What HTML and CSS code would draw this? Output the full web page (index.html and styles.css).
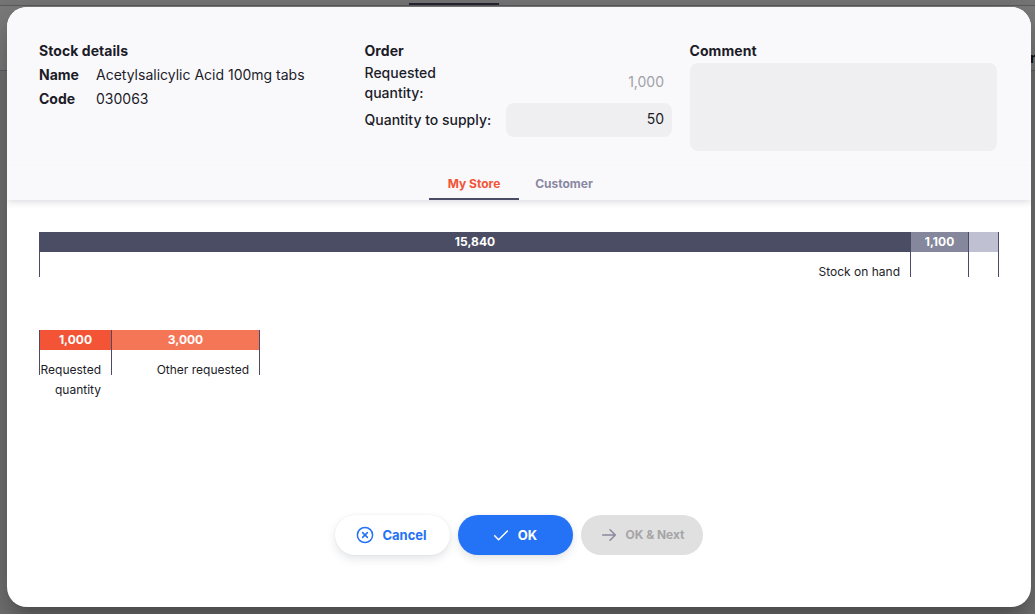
FILE: index.html
```html
<!DOCTYPE html>
<html lang="en">
<head>
<meta charset="utf-8">
<title>Stock details</title>
<link rel="stylesheet" href="styles.css">
</head>
<body>
<div class="page" aria-hidden="true">
  <div class="page-tabs"><span class="page-tab"></span></div>
  <div class="page-columns"><span class="page-column">m</span></div>
</div>
<main class="modal">
  <header class="header">
    <section class="col">
      <h2 class="title">Stock details</h2>
      <div class="detail"><b class="detail-key">Name</b><span class="value">Acetylsalicylic Acid 100mg tabs</span></div>
      <div class="detail"><b class="detail-key">Code</b><span class="value">030063</span></div>
    </section>
    <section class="col">
      <h2 class="title">Order</h2>
      <div class="field requested"><span class="field-label">Requested quantity:</span><span class="readonly">1,000</span></div>
      <div class="field"><span class="field-label">Quantity to supply:</span><span class="input">50</span></div>
    </section>
    <section class="col">
      <h2 class="title">Comment</h2>
      <div class="comment"></div>
    </section>
  </header>
  <nav class="tabs">
    <span class="tab active">My Store</span>
    <span class="tab">Customer</span>
  </nav>
  <div class="charts">
    <div class="chart stock">
      <div class="segment on-hand"><div class="bar">15,840</div><div class="caption">Stock on hand</div></div>
      <div class="segment incoming"><div class="bar">1,100</div><div class="caption"></div></div>
      <div class="segment other"><div class="bar"></div><div class="caption"></div></div>
    </div>
    <div class="chart demand">
      <div class="segment this-request"><div class="bar">1,000</div><div class="caption">Requested quantity</div></div>
      <div class="segment other-request"><div class="bar">3,000</div><div class="caption">Other requested</div></div>
    </div>
  </div>
  <footer class="actions">
    <button class="button cancel">
      <svg class="icon" viewBox="0 0 20 20"><circle cx="10" cy="10" r="7.6"/><path d="M7.6 7.6l4.8 4.8M12.4 7.6l-4.8 4.8"/></svg>
      Cancel
    </button>
    <button class="button ok">
      <svg class="icon" viewBox="0 0 20 20"><path d="M3.7 10.8l3.9 4L16.4 6"/></svg>
      OK
    </button>
    <button class="button next" disabled>
      <svg class="icon" viewBox="0 0 20 20"><path d="M3.7 10h12.6M11 4.7l5.3 5.3-5.3 5.3"/></svg>
      OK &amp; Next
    </button>
  </footer>
</main>
</body>
</html>
```
FILE: styles.css
```css
* { box-sizing: border-box; }
body {
  margin: 0;
  width: 1035px;
  height: 614px;
  overflow: hidden;
  position: relative;
  font-family: Inter, "Liberation Sans", sans-serif;
  color: #1c1c28;
  background: #747474;
}
.page-tabs {
  height: 6px;
  padding: 3px 0 0 409px;
  border-bottom: 1px solid #5c5c5e;
  background: #777;
}
.page-tab { display: block; width: 90px; height: 2px; background: #262632; }
.page-columns {
  display: flex;
  justify-content: flex-end;
  align-items: flex-end;
  height: 65px;
  padding-bottom: 4px;
  border-bottom: 1px solid #606064;
  background: #7c7c7d;
}
.page-column { width: 5px; font-size: 14px; font-weight: 700; line-height: 16px; color: #111; }
.modal {
  position: absolute;
  left: 7px;
  top: 7px;
  width: 1024px;
  height: 600px;
  display: flex;
  flex-direction: column;
  border-radius: 20px;
  overflow: hidden;
  background: #fff;
  box-shadow: 0 11px 15px -7px rgba(0,0,0,.2), 0 24px 38px 3px rgba(0,0,0,.14), 0 9px 46px 8px rgba(0,0,0,.12);
}
.header {
  display: grid;
  grid-template-columns: 308px 307.5px 307px;
  column-gap: 17.5px;
  height: 159px;
  padding: 32px;
  background: #f9f9fc;
  border-bottom: 1px solid #f7f7f9;
}
.title { margin: 0; font-size: 14px; line-height: 24px; font-weight: 700; letter-spacing: .06px; }
.detail { display: flex; font-size: 14px; line-height: 24px; }
.detail-key { width: 57px; }
.value { letter-spacing: 0; }
.field { display: flex; align-items: center; justify-content: space-between; font-size: 14px; line-height: 20px; }
.requested { height: 40px; }
.field-label { width: 130px; font-weight: 500; white-space: nowrap; }
.requested .field-label { width: 100px; white-space: normal; }
.readonly { padding: 0 8px 2px 0; color: #a0a0a5; }
.input {
  width: 166px;
  height: 34px;
  padding: 6px 8px 8px;
  border-radius: 8px;
  background: #efeff1;
  text-align: right;
}
.comment { width: 307px; height: 88px; border-radius: 8px; background: #efeff1; }
.tabs {
  display: flex;
  justify-content: center;
  height: 34px;
  background: #f9f9fc;
  box-shadow: 0 2px 7px rgba(40,41,61,.16);
  clip-path: inset(0 0 -12px);
}
.tab {
  width: 90px;
  border-bottom: 2px solid transparent;
  font-size: 12px;
  font-weight: 700;
  line-height: 36px;
  text-align: center;
  color: #8988a2;
}
.tab.active { color: #f25435; border-color: #4a4c66; }
.charts { display: flex; flex-direction: column; padding: 32px; }
.chart { display: flex; height: 98px; }
.segment { height: 45px; border-right: 1px solid #4a4c66; }
.segment:first-child { border-left: 1px solid #4a4c66; }
.bar { height: 20px; font-size: 12px; line-height: 20px; font-weight: 700; text-align: center; color: #fff; }
.caption { padding: 10px 10px 0 0; font-size: 12px; line-height: 20px; text-align: right; }
.on-hand { width: 872px; }
.on-hand .bar { background: #4b4d64; }
.incoming { width: 58px; }
.incoming .bar { background: #85879c; }
.other { width: 30px; }
.other .bar { background: #bfc1d3; }
.this-request { width: 73px; }
.this-request .bar { background: #f25435; }
.other-request { width: 148px; }
.other-request .bar { background: #f57557; }
.actions { display: flex; justify-content: center; gap: 8px; margin-top: auto; padding-bottom: 52px; }
.button {
  display: flex;
  align-items: center;
  justify-content: center;
  gap: 7px;
  height: 40px;
  padding: 0 3px 0 0;
  border: 0;
  border-radius: 20px;
  font: 700 13px/20px Inter, "Liberation Sans", sans-serif;
}
.icon { width: 20px; height: 20px; fill: none; stroke: currentColor; stroke-width: 1.5; stroke-linecap: round; stroke-linejoin: round; }
.cancel, .ok { width: 115px; box-shadow: 0 4px 8px rgba(96,97,112,.16), 0 0 2px rgba(40,41,61,.08); }
.cancel { color: #2472f5; background: #fff; }
.ok { color: #fff; background: #2472f5; }
.next { width: 122px; padding-right: 1px; font-size: 12px; line-height: 22px; letter-spacing: -.05px; color: #a5a5a6; background: #e0e0e0; }
.next .icon { color: #8888a0; }
```
